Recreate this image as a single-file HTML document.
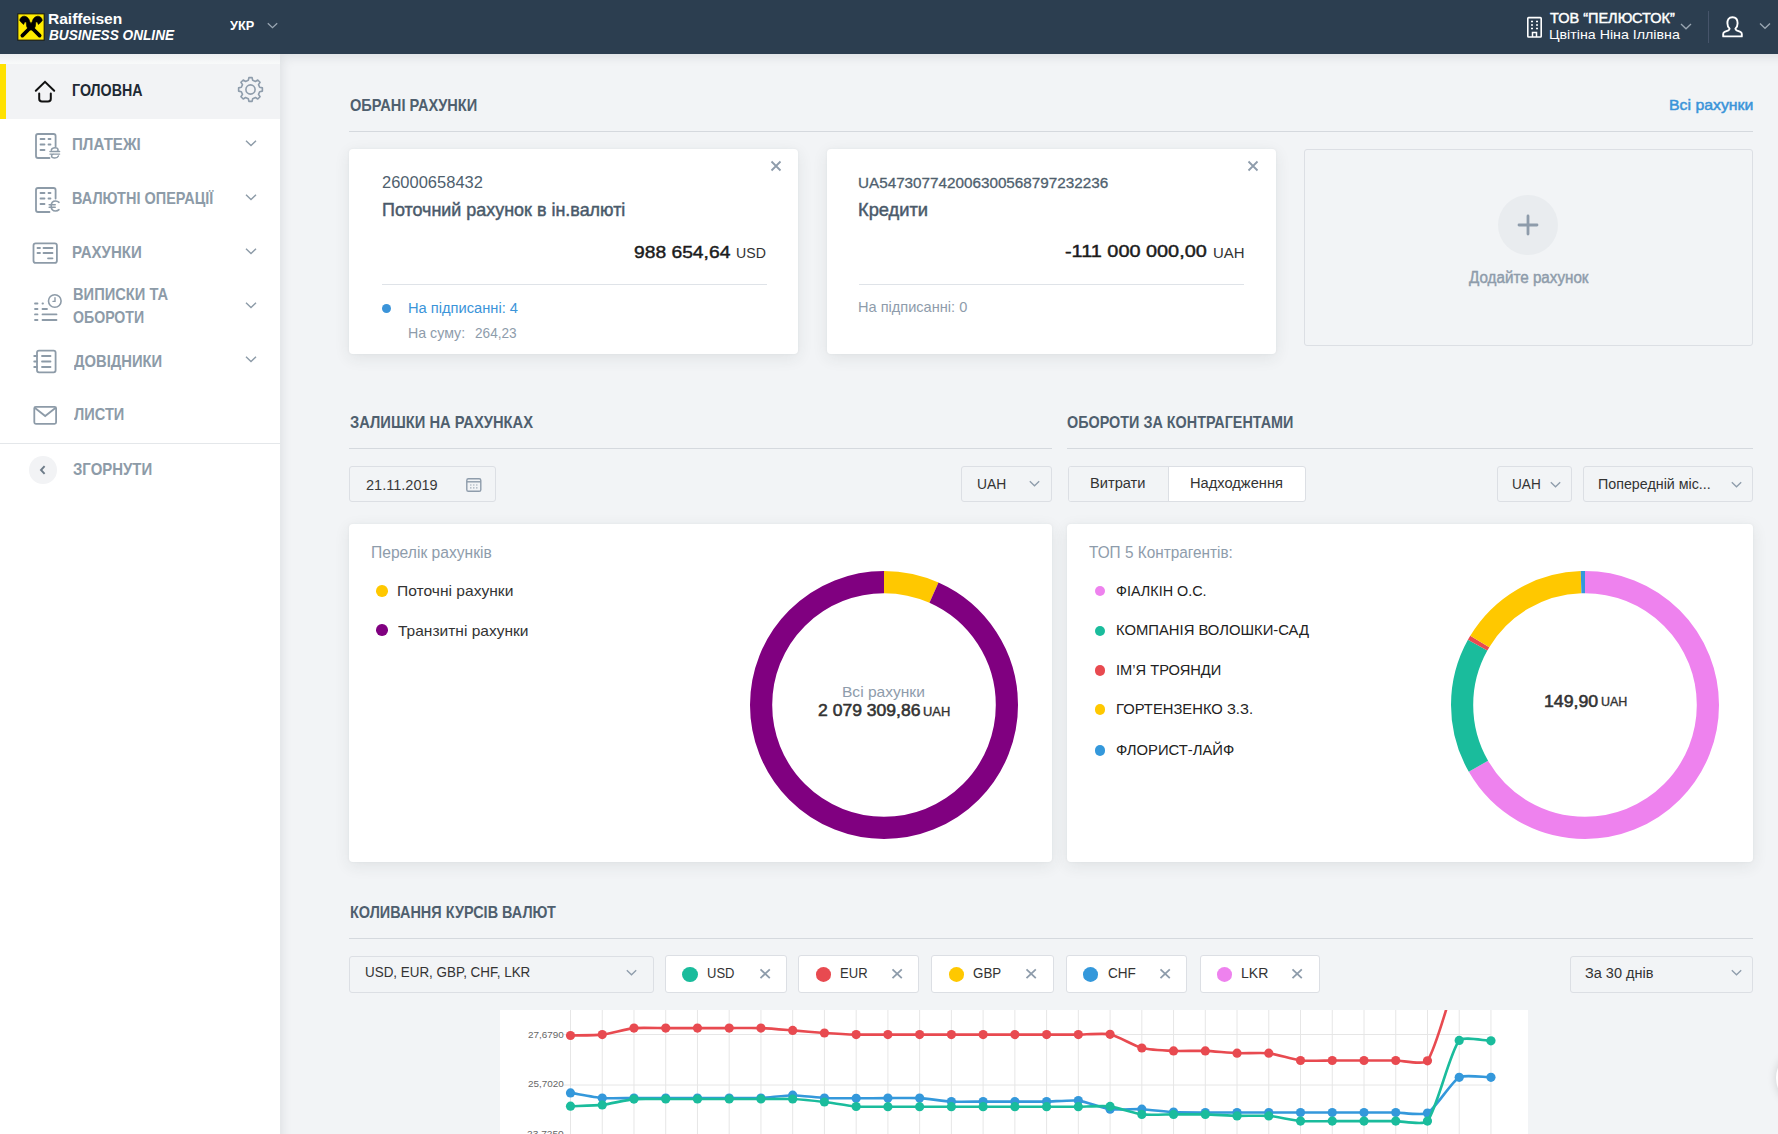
<!DOCTYPE html>
<html><head><meta charset="utf-8">
<style>
*{box-sizing:border-box;margin:0;padding:0}
html,body{width:1778px;height:1134px;overflow:hidden}
body{font-family:"Liberation Sans",sans-serif;background:#f2f4f6;position:relative}
.a{position:absolute}
.t{position:absolute;white-space:nowrap;line-height:1;z-index:10}
.box{position:absolute;border:1px solid #dcdfe4;border-radius:3px}
.card{position:absolute;background:#fff;border-radius:4px;box-shadow:0 4px 16px rgba(40,50,60,.09),0 0 3px rgba(40,50,60,.05)}
.hl{position:absolute;height:1px;background:#d5d9de}
</style></head>
<body>
<div class="a" style="left:0;top:0;width:1778px;height:54px;background:#2c3e50"></div>
<svg class="a" style="left:17px;top:13px" width="28" height="28" viewBox="-0.35 -0.35 28 28">
<rect x="0.5" y="0.5" width="26.3" height="26.3" fill="#ffec00" stroke="#111" stroke-width="1"/>
<g fill="#000" stroke="#000" stroke-linejoin="round">
<path d="M5 22.3 L13.65 13.6 L22.3 22.3" fill="none" stroke-width="3.7" stroke-linecap="round"/>
<path d="M2.3 6.9 Q3.4 2.7 7.0 2.8 Q10.1 2.9 11.7 6.2 L12.5 8.4 L13.65 10.1 L14.8 8.4 L15.6 6.2 Q17.2 2.9 20.3 2.8 Q23.9 2.7 25.0 6.9 Q23.8 9.2 21 11.2 L20.0 8.6 L18.5 8.6 L18.0 13.2 L16.6 15.6 L13.65 16.8 L10.7 15.6 L9.3 13.2 L8.8 8.6 L7.3 8.6 L6.3 11.2 Q3.5 9.2 2.3 6.9 Z" stroke-width="0.6"/>
</g>
</svg>
<svg class="a" style="left:266px;top:21px" width="13" height="9" viewBox="0 0 13 9"><path d="M1.8 2.2 L6.5 6.7 L11.2 2.2" stroke="#9aa6b2" stroke-width="1.3" fill="none"/></svg>
<svg class="a" style="left:1525px;top:15px" width="19" height="24" viewBox="0 0 19 24" fill="none" stroke="#fff" stroke-width="1.6">
<rect x="2.8" y="2.6" width="13.4" height="19.4" rx="0.8"/>
<path d="M6 6.5 H8 M11 6.5 H13 M6 10 H8 M11 10 H13 M6 13.5 H8 M11 13.5 H13" stroke-width="1.5"/>
<path d="M7.5 22 V17.5 H11.5 V22" stroke-width="1.5"/>
</svg>
<svg class="a" style="left:1679px;top:22px" width="14" height="9" viewBox="0 0 14 9"><path d="M2 2 L7 6.8 L12 2" stroke="#9aa6b2" stroke-width="1.3" fill="none"/></svg>
<div class="a" style="left:1708px;top:11px;width:1px;height:32px;background:#46546a"></div>
<svg class="a" style="left:1721px;top:15px" width="23" height="24" viewBox="0 0 23 24" fill="none" stroke="#fff" stroke-width="1.9" stroke-linejoin="round">
<path d="M11.5 2.2 C7.6 2.2 6.4 5.2 6.4 8.2 C6.4 10.8 7.5 12.6 8.6 13.6 C8.6 14.4 8.3 14.9 7.4 15.3 L3.6 16.8 C2.6 17.2 2.2 17.9 2.2 18.9 V21.4 H20.8 V18.9 C20.8 17.9 20.4 17.2 19.4 16.8 L15.6 15.3 C14.7 14.9 14.4 14.4 14.4 13.6 C15.5 12.6 16.6 10.8 16.6 8.2 C16.6 5.2 15.4 2.2 11.5 2.2 Z"/>
</svg>
<svg class="a" style="left:1758px;top:21px" width="14" height="10" viewBox="0 0 14 10"><path d="M2 2.5 L7 7.3 L12 2.5" stroke="#9aa6b2" stroke-width="1.3" fill="none"/></svg>
<div class="a" style="left:0;top:54px;width:280px;height:1080px;background:#fff"></div>
<div class="a" style="left:0;top:54px;width:280px;height:10px;background:linear-gradient(#eceef1,#f9fafa)"></div>
<div class="a" style="left:0;top:64px;width:280px;height:55px;background:#f2f3f5"></div>
<div class="a" style="left:0;top:64px;width:6px;height:55px;background:#ffe100"></div>
<svg class="a" style="left:33px;top:79px" width="24" height="26" viewBox="0 0 24 26">
<path d="M2.8 11.8 L12 2.8 L21.2 11.8" stroke="#111" stroke-width="2" fill="none" stroke-linecap="round"/>
<path d="M6.2 14.5 V19.8 Q6.2 22.6 9 22.6 H15 Q17.8 22.6 17.8 19.8 V14.5" stroke="#111" stroke-width="2" fill="none" stroke-linecap="round"/>
</svg>
<svg class="a" style="left:236px;top:75px" width="29" height="29" viewBox="0 0 29 29">
<path d="M12.31 5.36 L12.90 2.61 L16.10 2.61 L16.69 5.36 L19.41 6.49 L21.78 4.96 L24.04 7.22 L22.51 9.59 L23.64 12.31 L26.39 12.90 L26.39 16.10 L23.64 16.69 L22.51 19.41 L24.04 21.78 L21.78 24.04 L19.41 22.51 L16.69 23.64 L16.10 26.39 L12.90 26.39 L12.31 23.64 L9.59 22.51 L7.22 24.04 L4.96 21.78 L6.49 19.41 L5.36 16.69 L2.61 16.10 L2.61 12.90 L5.36 12.31 L6.49 9.59 L4.96 7.22 L7.22 4.96 L9.59 6.49 Z" stroke="#8e9cab" stroke-width="1.6" fill="none" stroke-linejoin="round"/>
<circle cx="14.5" cy="14.5" r="4.6" stroke="#8e9cab" stroke-width="1.6" fill="none"/>
</svg>
<svg class="a" style="left:244px;top:138.5px" width="14" height="9" viewBox="0 0 14 9"><path d="M2 1.8 L7 6.5 L12 1.8" stroke="#8d9ba8" stroke-width="1.4" fill="none"/></svg>
<svg class="a" style="left:244px;top:192.5px" width="14" height="9" viewBox="0 0 14 9"><path d="M2 1.8 L7 6.5 L12 1.8" stroke="#8d9ba8" stroke-width="1.4" fill="none"/></svg>
<svg class="a" style="left:244px;top:247.0px" width="14" height="9" viewBox="0 0 14 9"><path d="M2 1.8 L7 6.5 L12 1.8" stroke="#8d9ba8" stroke-width="1.4" fill="none"/></svg>
<svg class="a" style="left:244px;top:301.0px" width="14" height="9" viewBox="0 0 14 9"><path d="M2 1.8 L7 6.5 L12 1.8" stroke="#8d9ba8" stroke-width="1.4" fill="none"/></svg>
<svg class="a" style="left:244px;top:354.5px" width="14" height="9" viewBox="0 0 14 9"><path d="M2 1.8 L7 6.5 L12 1.8" stroke="#8d9ba8" stroke-width="1.4" fill="none"/></svg>
<div class="a" style="left:0;top:443px;width:280px;height:1px;background:#e4e7ea"></div>
<div class="a" style="left:29px;top:456px;width:27.5px;height:27.5px;border-radius:50%;background:#f2f3f5"></div>
<svg class="a" style="left:36px;top:463px" width="14" height="14" viewBox="0 0 14 14"><path d="M8.6 3.2 L5 7 L8.6 10.8" stroke="#6e7c89" stroke-width="1.9" fill="none"/></svg>
<svg class="a" style="left:30px;top:125px" width="34" height="305" viewBox="30 125 34 305" fill="none" stroke="#8d9ba8" stroke-width="1.8" stroke-linecap="round">
<path d="M49.5 158 H38 Q36 158 36 156 V136 Q36 134 38 134 H53.5 Q55.6 134 55.6 136 V146.5"/>
<path d="M40.5 139 H44.5 M48.5 139 H50.5 M40.5 144.5 H44.5 M48.5 144.5 H50.5 M40.5 150 H44.5"/>
<path d="M51.3 150 Q51.9 147.7 54.9 147.7 Q58.1 147.7 58.1 149.9 Q58.1 151 56.3 151.4 M50 151.4 H59.6 M50 154.1 H59.6 M53.4 154.1 Q51.5 154.8 51.5 156 Q51.6 158 54.8 158 Q57.6 158 58.4 156" stroke-width="1.45"/>
<path d="M49.5 212 H38 Q36 212 36 210 V190 Q36 188 38 188 H53.5 Q55.6 188 55.6 190 V198.5"/>
<path d="M40.5 193 H44.5 M48.5 193 H50.5 M40.5 198.5 H44.5 M48.5 198.5 H50.5 M40.5 204 H44.5"/>
<path d="M59 202.3 Q57.6 201 55.6 201 Q51.2 201 51.2 206 Q51.2 211 55.6 211 Q57.6 211 59 209.7 M49.2 204.8 H55.2 M49.2 207.2 H55.2" stroke-width="1.6"/>
<rect x="33.5" y="243.3" width="23.4" height="19.6" rx="2.2"/>
<path d="M37.5 248 H40 M43.5 248 H52.5 M37.5 253 H40 M43.5 253 H52.5 M48 258.3 H52.5"/>
<path d="M35 303.5 H37.5 M35 309 H37.5 M35 314.4 H37.5 M35 320 H37.5 M42.5 303.5 H43 M42.5 309 H47 M42.5 314.4 H56.5 M42.5 320 H56.5"/>
<circle cx="54.8" cy="301" r="6.3" stroke-width="1.6"/>
<path d="M55 297.8 V301.4 H53" stroke-width="1.4"/>
<rect x="37" y="350.6" width="18.6" height="21.7" rx="2"/>
<path d="M34.2 356 H37 M34.2 361.5 H37 M34.2 367 H37 M42 356 H50.5 M42 361.5 H50.5 M42 367 H50.5"/>
<rect x="34.3" y="406.8" width="21.8" height="17" rx="1.5"/>
<path d="M35 408 L45.2 416 L55.4 408"/>
</svg>
<div class="a" style="left:280px;top:54px;width:1498px;height:1080px;box-shadow:inset 8px 9px 12px -7px rgba(30,40,50,.11)"></div>
<div class="hl" style="left:349px;top:130.5px;width:1404px"></div>
<div class="card" style="left:349px;top:149px;width:449px;height:205px"></div>
<div class="card" style="left:827px;top:149px;width:449px;height:205px"></div>
<div class="box" style="left:1304px;top:149px;width:449px;height:197px;border-color:#dcdfe4"></div>
<svg class="a" style="left:770px;top:160px" width="12" height="12" viewBox="0 0 12 12"><path d="M1.5 1.5 L10.5 10.5 M10.5 1.5 L1.5 10.5" stroke="#8e9cab" stroke-width="1.8"/></svg>
<svg class="a" style="left:1247px;top:160px" width="12" height="12" viewBox="0 0 12 12"><path d="M1.5 1.5 L10.5 10.5 M10.5 1.5 L1.5 10.5" stroke="#8e9cab" stroke-width="1.8"/></svg>
<div class="hl" style="left:382px;top:284px;width:385px;background:#dfe3e8"></div>
<div class="a" style="left:382px;top:303.5px;width:9px;height:9px;border-radius:50%;background:#3b94d9"></div>
<div class="hl" style="left:859px;top:284px;width:385px;background:#dfe3e8"></div>
<div class="a" style="left:1498px;top:195.3px;width:60px;height:60px;border-radius:50%;background:#e9ecef"></div>
<svg class="a" style="left:1516px;top:213px" width="24" height="24" viewBox="0 0 24 24"><path d="M12 3 V21 M3 12 H21" stroke="#8e9cab" stroke-width="2.8" stroke-linecap="round"/></svg>
<div class="hl" style="left:349px;top:448px;width:702.5px"></div>
<div class="hl" style="left:1067px;top:448px;width:686px"></div>
<div class="box" style="left:349px;top:466px;width:146.5px;height:36px"></div>
<svg class="a" style="left:465px;top:477px" width="18" height="16" viewBox="0 0 18 16" fill="none" stroke="#8e9cab">
<rect x="1.8" y="1.8" width="14" height="12.5" rx="1.6" stroke-width="1.4"/>
<path d="M1.8 4.8 H15.8" stroke-width="1.4"/>
<path d="M5.2 8 H6.4 M8.2 8 H9.4 M11.2 8 H12.4 M5.2 10.8 H6.4 M8.2 10.8 H9.4 M11.2 10.8 H12.4" stroke-width="1.2"/>
</svg>
<div class="box" style="left:961.4px;top:466px;width:90.2px;height:36px"></div>
<svg class="a" style="left:1028.2px;top:479.4px" width="13" height="9" viewBox="0 0 13 9"><path d="M1.8 2.2 L6.5 6.8 L11.2 2.2" stroke="#8e9cab" stroke-width="1.3" fill="none"/></svg>
<div class="box" style="left:1067.6px;top:466px;width:238px;height:36px;background:#fff;overflow:hidden"><div class="a" style="left:0;top:0;width:100.5px;height:34px;background:#f2f4f6;border-right:1px solid #dcdfe4"></div></div>
<div class="box" style="left:1497.3px;top:466px;width:75.2px;height:36px"></div>
<svg class="a" style="left:1549.2px;top:479.8px" width="13" height="9" viewBox="0 0 13 9"><path d="M1.8 2.2 L6.5 6.8 L11.2 2.2" stroke="#8e9cab" stroke-width="1.3" fill="none"/></svg>
<div class="box" style="left:1583.4px;top:466px;width:169.6px;height:36px"></div>
<svg class="a" style="left:1729.5px;top:479.8px" width="13" height="9" viewBox="0 0 13 9"><path d="M1.8 2.2 L6.5 6.8 L11.2 2.2" stroke="#8e9cab" stroke-width="1.3" fill="none"/></svg>
<div class="card" style="left:349px;top:524px;width:702.5px;height:337.6px"></div>
<div class="card" style="left:1067px;top:524px;width:686px;height:337.8px"></div>
<div class="a" style="left:376.2px;top:585px;width:11.6px;height:11.6px;border-radius:50%;background:#ffc800"></div>
<div class="a" style="left:376.2px;top:624.4px;width:11.6px;height:11.6px;border-radius:50%;background:#800080"></div>
<svg class="a" style="left:743.9px;top:565.2px" width="280" height="280" viewBox="0 0 280 280"><g transform="rotate(-90 140 140)"><circle cx="140" cy="140" r="122.9" fill="none" stroke="#ffc800" stroke-width="22.2" stroke-dasharray="51.480 772.203" stroke-dashoffset="0.000"/><circle cx="140" cy="140" r="122.9" fill="none" stroke="#800080" stroke-width="22.2" stroke-dasharray="720.723 772.203" stroke-dashoffset="-51.480"/></g></svg>
<div class="a" style="left:1094.6000000000001px;top:585.7px;width:10.6px;height:10.6px;border-radius:50%;background:#ee82ee"></div>
<div class="a" style="left:1094.6000000000001px;top:625.5px;width:10.6px;height:10.6px;border-radius:50%;background:#1abc9c"></div>
<div class="a" style="left:1094.6000000000001px;top:665.3000000000001px;width:10.6px;height:10.6px;border-radius:50%;background:#e84a50"></div>
<div class="a" style="left:1094.6000000000001px;top:704.0px;width:10.6px;height:10.6px;border-radius:50%;background:#ffc800"></div>
<div class="a" style="left:1094.6000000000001px;top:745.0px;width:10.6px;height:10.6px;border-radius:50%;background:#3498db"></div>
<svg class="a" style="left:1445.3px;top:565.3px" width="280" height="280" viewBox="0 0 280 280"><g transform="rotate(-90 140 140)"><circle cx="140" cy="140" r="122.9" fill="none" stroke="#ee82ee" stroke-width="22.2" stroke-dasharray="514.802 772.203" stroke-dashoffset="0.000"/><circle cx="140" cy="140" r="122.9" fill="none" stroke="#1abc9c" stroke-width="22.2" stroke-dasharray="126.556 772.203" stroke-dashoffset="-514.802"/><circle cx="140" cy="140" r="122.9" fill="none" stroke="#e84a50" stroke-width="22.2" stroke-dasharray="4.290 772.203" stroke-dashoffset="-641.358"/><circle cx="140" cy="140" r="122.9" fill="none" stroke="#ffc800" stroke-width="22.2" stroke-dasharray="122.266 772.203" stroke-dashoffset="-645.648"/><circle cx="140" cy="140" r="122.9" fill="none" stroke="#3498db" stroke-width="22.2" stroke-dasharray="4.290 772.203" stroke-dashoffset="-767.913"/></g></svg>
<div class="hl" style="left:349px;top:938px;width:1404px"></div>
<div class="box" style="left:349px;top:955.5px;width:305px;height:37px"></div>
<svg class="a" style="left:625.0px;top:967.7px" width="13" height="9" viewBox="0 0 13 9"><path d="M1.8 2.2 L6.5 6.8 L11.2 2.2" stroke="#8e9cab" stroke-width="1.3" fill="none"/></svg>
<div class="box" style="left:665.3px;top:955px;width:122px;height:37.5px;background:#fff"></div>
<div class="a" style="left:682.3px;top:966.5px;width:15.5px;height:15px;border-radius:50%;background:#1abc9c"></div>
<svg class="a" style="left:758.8px;top:968px" width="12.5" height="11.5" viewBox="0 0 12.5 11.5"><path d="M1.5 1.3 L10.8 10.2 M10.8 1.3 L1.5 10.2" stroke="#8e9cab" stroke-width="1.8"/></svg>
<div class="box" style="left:798.2px;top:955px;width:121.2px;height:37.5px;background:#fff"></div>
<div class="a" style="left:815.8px;top:966.5px;width:15.5px;height:15px;border-radius:50%;background:#e84a50"></div>
<svg class="a" style="left:890.9px;top:968px" width="12.5" height="11.5" viewBox="0 0 12.5 11.5"><path d="M1.5 1.3 L10.8 10.2 M10.8 1.3 L1.5 10.2" stroke="#8e9cab" stroke-width="1.8"/></svg>
<div class="box" style="left:931px;top:955px;width:123px;height:37.5px;background:#fff"></div>
<div class="a" style="left:948.5px;top:966.5px;width:15.5px;height:15px;border-radius:50%;background:#ffc800"></div>
<svg class="a" style="left:1024.8px;top:968px" width="12.5" height="11.5" viewBox="0 0 12.5 11.5"><path d="M1.5 1.3 L10.8 10.2 M10.8 1.3 L1.5 10.2" stroke="#8e9cab" stroke-width="1.8"/></svg>
<div class="box" style="left:1065.6px;top:955px;width:121.6px;height:37.5px;background:#fff"></div>
<div class="a" style="left:1082.6px;top:966.5px;width:15.5px;height:15px;border-radius:50%;background:#3498db"></div>
<svg class="a" style="left:1158.7px;top:968px" width="12.5" height="11.5" viewBox="0 0 12.5 11.5"><path d="M1.5 1.3 L10.8 10.2 M10.8 1.3 L1.5 10.2" stroke="#8e9cab" stroke-width="1.8"/></svg>
<div class="box" style="left:1199.5px;top:955px;width:120px;height:37.5px;background:#fff"></div>
<div class="a" style="left:1216.5px;top:966.5px;width:15.5px;height:15px;border-radius:50%;background:#ee82ee"></div>
<svg class="a" style="left:1290.6px;top:968px" width="12.5" height="11.5" viewBox="0 0 12.5 11.5"><path d="M1.5 1.3 L10.8 10.2 M10.8 1.3 L1.5 10.2" stroke="#8e9cab" stroke-width="1.8"/></svg>
<div class="box" style="left:1570px;top:955.5px;width:183px;height:37px"></div>
<svg class="a" style="left:1729.5px;top:968px" width="13" height="9" viewBox="0 0 13 9"><path d="M1.8 2.2 L6.5 6.8 L11.2 2.2" stroke="#8e9cab" stroke-width="1.3" fill="none"/></svg>
<svg class="a" style="left:500px;top:1010px" width="1028" height="124" viewBox="500 1010 1028 124"><rect x="500" y="1010" width="1028" height="124" fill="#fff"/><line x1="570.50" y1="1010" x2="570.50" y2="1134" stroke="#e6e6e6" stroke-width="1"/><line x1="602.24" y1="1010" x2="602.24" y2="1134" stroke="#e6e6e6" stroke-width="1"/><line x1="633.98" y1="1010" x2="633.98" y2="1134" stroke="#e6e6e6" stroke-width="1"/><line x1="665.72" y1="1010" x2="665.72" y2="1134" stroke="#e6e6e6" stroke-width="1"/><line x1="697.46" y1="1010" x2="697.46" y2="1134" stroke="#e6e6e6" stroke-width="1"/><line x1="729.20" y1="1010" x2="729.20" y2="1134" stroke="#e6e6e6" stroke-width="1"/><line x1="760.94" y1="1010" x2="760.94" y2="1134" stroke="#e6e6e6" stroke-width="1"/><line x1="792.68" y1="1010" x2="792.68" y2="1134" stroke="#e6e6e6" stroke-width="1"/><line x1="824.42" y1="1010" x2="824.42" y2="1134" stroke="#e6e6e6" stroke-width="1"/><line x1="856.16" y1="1010" x2="856.16" y2="1134" stroke="#e6e6e6" stroke-width="1"/><line x1="887.90" y1="1010" x2="887.90" y2="1134" stroke="#e6e6e6" stroke-width="1"/><line x1="919.64" y1="1010" x2="919.64" y2="1134" stroke="#e6e6e6" stroke-width="1"/><line x1="951.38" y1="1010" x2="951.38" y2="1134" stroke="#e6e6e6" stroke-width="1"/><line x1="983.12" y1="1010" x2="983.12" y2="1134" stroke="#e6e6e6" stroke-width="1"/><line x1="1014.86" y1="1010" x2="1014.86" y2="1134" stroke="#e6e6e6" stroke-width="1"/><line x1="1046.60" y1="1010" x2="1046.60" y2="1134" stroke="#e6e6e6" stroke-width="1"/><line x1="1078.34" y1="1010" x2="1078.34" y2="1134" stroke="#e6e6e6" stroke-width="1"/><line x1="1110.08" y1="1010" x2="1110.08" y2="1134" stroke="#e6e6e6" stroke-width="1"/><line x1="1141.82" y1="1010" x2="1141.82" y2="1134" stroke="#e6e6e6" stroke-width="1"/><line x1="1173.56" y1="1010" x2="1173.56" y2="1134" stroke="#e6e6e6" stroke-width="1"/><line x1="1205.30" y1="1010" x2="1205.30" y2="1134" stroke="#e6e6e6" stroke-width="1"/><line x1="1237.04" y1="1010" x2="1237.04" y2="1134" stroke="#e6e6e6" stroke-width="1"/><line x1="1268.78" y1="1010" x2="1268.78" y2="1134" stroke="#e6e6e6" stroke-width="1"/><line x1="1300.52" y1="1010" x2="1300.52" y2="1134" stroke="#e6e6e6" stroke-width="1"/><line x1="1332.26" y1="1010" x2="1332.26" y2="1134" stroke="#e6e6e6" stroke-width="1"/><line x1="1364.00" y1="1010" x2="1364.00" y2="1134" stroke="#e6e6e6" stroke-width="1"/><line x1="1395.74" y1="1010" x2="1395.74" y2="1134" stroke="#e6e6e6" stroke-width="1"/><line x1="1427.48" y1="1010" x2="1427.48" y2="1134" stroke="#e6e6e6" stroke-width="1"/><line x1="1459.22" y1="1010" x2="1459.22" y2="1134" stroke="#e6e6e6" stroke-width="1"/><line x1="1490.96" y1="1010" x2="1490.96" y2="1134" stroke="#e6e6e6" stroke-width="1"/><line x1="563" y1="1034.5" x2="1490.96" y2="1034.5" stroke="#e6e6e6" stroke-width="1"/><line x1="563" y1="1085" x2="1490.96" y2="1085" stroke="#e6e6e6" stroke-width="1"/><line x1="563" y1="1135.5" x2="1490.96" y2="1135.5" stroke="#e6e6e6" stroke-width="1"/><defs><clipPath id="cc"><rect x="500" y="1010" width="1028" height="124"/></clipPath></defs><g clip-path="url(#cc)"><path d="M570.50 1035.50 C576.85 1035.32 595.96 1035.33 602.24 1034.60 C608.65 1033.85 627.57 1028.76 633.98 1028.10 C640.26 1027.46 659.37 1028.10 665.72 1028.10 C672.07 1028.10 691.11 1028.10 697.46 1028.10 C703.81 1028.10 722.85 1028.10 729.20 1028.10 C735.55 1028.10 754.60 1027.87 760.94 1028.10 C767.30 1028.33 786.33 1029.91 792.68 1030.40 C799.03 1030.89 818.07 1032.58 824.42 1033.00 C830.76 1033.42 849.81 1034.44 856.16 1034.60 C862.50 1034.76 881.55 1034.60 887.90 1034.60 C894.25 1034.60 913.29 1034.60 919.64 1034.60 C925.99 1034.60 945.03 1034.60 951.38 1034.60 C957.73 1034.60 976.77 1034.60 983.12 1034.60 C989.47 1034.60 1008.51 1034.60 1014.86 1034.60 C1021.21 1034.60 1040.25 1034.60 1046.60 1034.60 C1052.95 1034.60 1071.99 1034.63 1078.34 1034.60 C1084.69 1034.57 1104.00 1033.02 1110.08 1034.30 C1116.70 1035.70 1135.21 1046.27 1141.82 1048.00 C1147.91 1049.59 1167.20 1050.61 1173.56 1050.90 C1179.89 1051.19 1198.96 1050.67 1205.30 1050.90 C1211.66 1051.13 1230.68 1052.97 1237.04 1053.20 C1243.38 1053.43 1262.51 1052.48 1268.78 1053.20 C1275.21 1053.94 1294.09 1059.76 1300.52 1060.50 C1306.79 1061.22 1325.91 1060.50 1332.26 1060.50 C1338.61 1060.50 1357.65 1060.50 1364.00 1060.50 C1370.35 1060.50 1389.39 1060.47 1395.74 1060.50 C1402.09 1060.53 1424.42 1065.35 1427.48 1060.80 C1437.12 1046.45 1452.87 984.96 1459.22 966.00" fill="none" stroke="#e84a50" stroke-width="2.6" stroke-linejoin="round"/><circle cx="570.50" cy="1035.50" r="4.6" fill="#e84a50"/><circle cx="602.24" cy="1034.60" r="4.6" fill="#e84a50"/><circle cx="633.98" cy="1028.10" r="4.6" fill="#e84a50"/><circle cx="665.72" cy="1028.10" r="4.6" fill="#e84a50"/><circle cx="697.46" cy="1028.10" r="4.6" fill="#e84a50"/><circle cx="729.20" cy="1028.10" r="4.6" fill="#e84a50"/><circle cx="760.94" cy="1028.10" r="4.6" fill="#e84a50"/><circle cx="792.68" cy="1030.40" r="4.6" fill="#e84a50"/><circle cx="824.42" cy="1033.00" r="4.6" fill="#e84a50"/><circle cx="856.16" cy="1034.60" r="4.6" fill="#e84a50"/><circle cx="887.90" cy="1034.60" r="4.6" fill="#e84a50"/><circle cx="919.64" cy="1034.60" r="4.6" fill="#e84a50"/><circle cx="951.38" cy="1034.60" r="4.6" fill="#e84a50"/><circle cx="983.12" cy="1034.60" r="4.6" fill="#e84a50"/><circle cx="1014.86" cy="1034.60" r="4.6" fill="#e84a50"/><circle cx="1046.60" cy="1034.60" r="4.6" fill="#e84a50"/><circle cx="1078.34" cy="1034.60" r="4.6" fill="#e84a50"/><circle cx="1110.08" cy="1034.30" r="4.6" fill="#e84a50"/><circle cx="1141.82" cy="1048.00" r="4.6" fill="#e84a50"/><circle cx="1173.56" cy="1050.90" r="4.6" fill="#e84a50"/><circle cx="1205.30" cy="1050.90" r="4.6" fill="#e84a50"/><circle cx="1237.04" cy="1053.20" r="4.6" fill="#e84a50"/><circle cx="1268.78" cy="1053.20" r="4.6" fill="#e84a50"/><circle cx="1300.52" cy="1060.50" r="4.6" fill="#e84a50"/><circle cx="1332.26" cy="1060.50" r="4.6" fill="#e84a50"/><circle cx="1364.00" cy="1060.50" r="4.6" fill="#e84a50"/><circle cx="1395.74" cy="1060.50" r="4.6" fill="#e84a50"/><circle cx="1427.48" cy="1060.80" r="4.6" fill="#e84a50"/><circle cx="1459.22" cy="966.00" r="4.6" fill="#e84a50"/><path d="M570.50 1092.90 C576.85 1093.92 595.85 1097.49 602.24 1098.00 C608.55 1098.51 627.63 1098.00 633.98 1098.00 C640.33 1098.00 659.37 1098.00 665.72 1098.00 C672.07 1098.00 691.11 1098.00 697.46 1098.00 C703.81 1098.00 722.85 1098.00 729.20 1098.00 C735.55 1098.00 754.60 1098.28 760.94 1098.00 C767.30 1097.72 786.33 1095.20 792.68 1095.20 C799.03 1095.20 818.06 1097.69 824.42 1098.00 C830.76 1098.31 849.81 1098.29 856.16 1098.30 C862.51 1098.31 881.55 1098.12 887.90 1098.10 C894.25 1098.08 913.31 1097.75 919.64 1098.10 C926.01 1098.45 945.01 1101.25 951.38 1101.60 C957.71 1101.95 976.77 1101.60 983.12 1101.60 C989.47 1101.60 1008.51 1101.60 1014.86 1101.60 C1021.21 1101.60 1040.25 1101.70 1046.60 1101.60 C1052.95 1101.50 1072.10 1099.85 1078.34 1100.60 C1084.80 1101.37 1103.62 1108.32 1110.08 1109.20 C1116.32 1110.04 1135.49 1108.91 1141.82 1109.20 C1148.18 1109.49 1167.20 1111.77 1173.56 1112.10 C1179.90 1112.43 1198.95 1112.46 1205.30 1112.50 C1211.65 1112.54 1230.69 1112.50 1237.04 1112.50 C1243.39 1112.50 1262.43 1112.50 1268.78 1112.50 C1275.13 1112.50 1294.17 1112.50 1300.52 1112.50 C1306.87 1112.50 1325.91 1112.50 1332.26 1112.50 C1338.61 1112.50 1357.65 1112.50 1364.00 1112.50 C1370.35 1112.50 1389.39 1112.45 1395.74 1112.50 C1402.09 1112.55 1422.41 1115.81 1427.48 1113.00 C1435.11 1108.77 1451.59 1081.59 1459.22 1077.30 C1464.29 1074.45 1484.61 1077.30 1490.96 1077.30" fill="none" stroke="#3498db" stroke-width="2.6" stroke-linejoin="round"/><circle cx="570.50" cy="1092.90" r="4.6" fill="#3498db"/><circle cx="602.24" cy="1098.00" r="4.6" fill="#3498db"/><circle cx="633.98" cy="1098.00" r="4.6" fill="#3498db"/><circle cx="665.72" cy="1098.00" r="4.6" fill="#3498db"/><circle cx="697.46" cy="1098.00" r="4.6" fill="#3498db"/><circle cx="729.20" cy="1098.00" r="4.6" fill="#3498db"/><circle cx="760.94" cy="1098.00" r="4.6" fill="#3498db"/><circle cx="792.68" cy="1095.20" r="4.6" fill="#3498db"/><circle cx="824.42" cy="1098.00" r="4.6" fill="#3498db"/><circle cx="856.16" cy="1098.30" r="4.6" fill="#3498db"/><circle cx="887.90" cy="1098.10" r="4.6" fill="#3498db"/><circle cx="919.64" cy="1098.10" r="4.6" fill="#3498db"/><circle cx="951.38" cy="1101.60" r="4.6" fill="#3498db"/><circle cx="983.12" cy="1101.60" r="4.6" fill="#3498db"/><circle cx="1014.86" cy="1101.60" r="4.6" fill="#3498db"/><circle cx="1046.60" cy="1101.60" r="4.6" fill="#3498db"/><circle cx="1078.34" cy="1100.60" r="4.6" fill="#3498db"/><circle cx="1110.08" cy="1109.20" r="4.6" fill="#3498db"/><circle cx="1141.82" cy="1109.20" r="4.6" fill="#3498db"/><circle cx="1173.56" cy="1112.10" r="4.6" fill="#3498db"/><circle cx="1205.30" cy="1112.50" r="4.6" fill="#3498db"/><circle cx="1237.04" cy="1112.50" r="4.6" fill="#3498db"/><circle cx="1268.78" cy="1112.50" r="4.6" fill="#3498db"/><circle cx="1300.52" cy="1112.50" r="4.6" fill="#3498db"/><circle cx="1332.26" cy="1112.50" r="4.6" fill="#3498db"/><circle cx="1364.00" cy="1112.50" r="4.6" fill="#3498db"/><circle cx="1395.74" cy="1112.50" r="4.6" fill="#3498db"/><circle cx="1427.48" cy="1113.00" r="4.6" fill="#3498db"/><circle cx="1459.22" cy="1077.30" r="4.6" fill="#3498db"/><circle cx="1490.96" cy="1077.30" r="4.6" fill="#3498db"/><path d="M570.50 1106.20 C576.85 1105.94 595.94 1105.60 602.24 1104.90 C608.64 1104.18 627.58 1099.69 633.98 1099.10 C640.28 1098.51 659.37 1099.01 665.72 1099.00 C672.07 1098.99 691.11 1099.00 697.46 1099.00 C703.81 1099.00 722.85 1099.00 729.20 1099.00 C735.55 1099.00 754.59 1099.00 760.94 1099.00 C767.29 1099.00 786.35 1098.70 792.68 1099.00 C799.04 1099.30 818.09 1101.25 824.42 1102.00 C830.79 1102.75 849.78 1106.03 856.16 1106.50 C862.48 1106.97 881.55 1106.68 887.90 1106.70 C894.25 1106.72 913.29 1106.70 919.64 1106.70 C925.99 1106.70 945.03 1106.70 951.38 1106.70 C957.73 1106.70 976.77 1106.70 983.12 1106.70 C989.47 1106.70 1008.51 1106.70 1014.86 1106.70 C1021.21 1106.70 1040.25 1106.70 1046.60 1106.70 C1052.95 1106.70 1071.99 1106.73 1078.34 1106.70 C1084.69 1106.67 1103.83 1105.64 1110.08 1106.40 C1116.53 1107.18 1135.37 1113.59 1141.82 1114.40 C1148.07 1115.19 1167.21 1114.40 1173.56 1114.40 C1179.91 1114.40 1198.96 1114.25 1205.30 1114.40 C1211.65 1114.55 1230.69 1115.75 1237.04 1115.90 C1243.38 1116.05 1262.47 1115.38 1268.78 1115.90 C1275.17 1116.42 1294.13 1120.58 1300.52 1121.10 C1306.83 1121.62 1325.91 1121.10 1332.26 1121.10 C1338.61 1121.10 1357.65 1121.10 1364.00 1121.10 C1370.35 1121.10 1389.39 1121.10 1395.74 1121.10 C1402.09 1121.10 1424.08 1125.42 1427.48 1121.10 C1436.77 1109.28 1449.93 1052.16 1459.22 1040.40 C1462.62 1036.10 1484.61 1040.72 1490.96 1040.80" fill="none" stroke="#1abc9c" stroke-width="2.6" stroke-linejoin="round"/><circle cx="570.50" cy="1106.20" r="4.6" fill="#1abc9c"/><circle cx="602.24" cy="1104.90" r="4.6" fill="#1abc9c"/><circle cx="633.98" cy="1099.10" r="4.6" fill="#1abc9c"/><circle cx="665.72" cy="1099.00" r="4.6" fill="#1abc9c"/><circle cx="697.46" cy="1099.00" r="4.6" fill="#1abc9c"/><circle cx="729.20" cy="1099.00" r="4.6" fill="#1abc9c"/><circle cx="760.94" cy="1099.00" r="4.6" fill="#1abc9c"/><circle cx="792.68" cy="1099.00" r="4.6" fill="#1abc9c"/><circle cx="824.42" cy="1102.00" r="4.6" fill="#1abc9c"/><circle cx="856.16" cy="1106.50" r="4.6" fill="#1abc9c"/><circle cx="887.90" cy="1106.70" r="4.6" fill="#1abc9c"/><circle cx="919.64" cy="1106.70" r="4.6" fill="#1abc9c"/><circle cx="951.38" cy="1106.70" r="4.6" fill="#1abc9c"/><circle cx="983.12" cy="1106.70" r="4.6" fill="#1abc9c"/><circle cx="1014.86" cy="1106.70" r="4.6" fill="#1abc9c"/><circle cx="1046.60" cy="1106.70" r="4.6" fill="#1abc9c"/><circle cx="1078.34" cy="1106.70" r="4.6" fill="#1abc9c"/><circle cx="1110.08" cy="1106.40" r="4.6" fill="#1abc9c"/><circle cx="1141.82" cy="1114.40" r="4.6" fill="#1abc9c"/><circle cx="1173.56" cy="1114.40" r="4.6" fill="#1abc9c"/><circle cx="1205.30" cy="1114.40" r="4.6" fill="#1abc9c"/><circle cx="1237.04" cy="1115.90" r="4.6" fill="#1abc9c"/><circle cx="1268.78" cy="1115.90" r="4.6" fill="#1abc9c"/><circle cx="1300.52" cy="1121.10" r="4.6" fill="#1abc9c"/><circle cx="1332.26" cy="1121.10" r="4.6" fill="#1abc9c"/><circle cx="1364.00" cy="1121.10" r="4.6" fill="#1abc9c"/><circle cx="1395.74" cy="1121.10" r="4.6" fill="#1abc9c"/><circle cx="1427.48" cy="1121.10" r="4.6" fill="#1abc9c"/><circle cx="1459.22" cy="1040.40" r="4.6" fill="#1abc9c"/><circle cx="1490.96" cy="1040.80" r="4.6" fill="#1abc9c"/></g></svg>
<div class="a" style="left:1776px;top:1050px;width:56px;height:56px;border-radius:50%;background:#fff;box-shadow:0 0 10px rgba(0,0,0,.15)"></div>
<div id="tx0" class="t" style="left:47.99px;top:12.35px;font-size:14px;font-weight:bold;font-style:normal;color:#fff;transform:scaleX(1.1096);transform-origin:0 0;">Raiffeisen</div>
<div id="tx1" class="t" style="left:49.00px;top:28.30px;font-size:14.3px;font-weight:bold;font-style:italic;color:#fff;transform:scaleX(0.9545);transform-origin:0 0;">BUSINESS ONLINE</div>
<div id="tx2" class="t" style="left:230.00px;top:20.49px;font-size:12.3px;font-weight:bold;font-style:normal;color:#fff;transform:scaleX(1.0329);transform-origin:0 0;">УКР</div>
<div id="tx3" class="t" style="left:1550.20px;top:11.48px;font-size:14.2px;font-weight:normal;font-style:normal;color:#fff;-webkit-text-stroke:0.45px #fff;transform:scaleX(1.0221);transform-origin:0 0;">ТОВ “ПЕЛЮСТОК”</div>
<div id="tx4" class="t" style="left:1549.20px;top:28.44px;font-size:13.3px;font-weight:normal;font-style:normal;color:#fff;transform:scaleX(1.0698);transform-origin:0 0;">Цвітіна Ніна Іллівна</div>
<div id="tx5" class="t" style="left:72.39px;top:81.81px;font-size:17px;font-weight:bold;font-style:normal;color:#1e2933;transform:scaleX(0.8378);transform-origin:0 0;">ГОЛОВНА</div>
<div id="tx6" class="t" style="left:72.39px;top:136.31px;font-size:17px;font-weight:bold;font-style:normal;color:#8d9ba8;transform:scaleX(0.8891);transform-origin:0 0;">ПЛАТЕЖІ</div>
<div id="tx7" class="t" style="left:72.41px;top:190.11px;font-size:17px;font-weight:bold;font-style:normal;color:#8d9ba8;transform:scaleX(0.8520);transform-origin:0 0;">ВАЛЮТНІ ОПЕРАЦІЇ</div>
<div id="tx8" class="t" style="left:72.39px;top:243.61px;font-size:17px;font-weight:bold;font-style:normal;color:#8d9ba8;transform:scaleX(0.8845);transform-origin:0 0;">РАХУНКИ</div>
<div id="tx9" class="t" style="left:72.99px;top:286.01px;font-size:17px;font-weight:bold;font-style:normal;color:#8d9ba8;transform:scaleX(0.8634);transform-origin:0 0;">ВИПИСКИ ТА</div>
<div id="tx10" class="t" style="left:72.99px;top:309.31px;font-size:17px;font-weight:bold;font-style:normal;color:#8d9ba8;transform:scaleX(0.8310);transform-origin:0 0;">ОБОРОТИ</div>
<div id="tx11" class="t" style="left:74.00px;top:353.01px;font-size:17px;font-weight:bold;font-style:normal;color:#8d9ba8;transform:scaleX(0.8684);transform-origin:0 0;">ДОВІДНИКИ</div>
<div id="tx12" class="t" style="left:74.00px;top:406.11px;font-size:17px;font-weight:bold;font-style:normal;color:#8d9ba8;transform:scaleX(0.8577);transform-origin:0 0;">ЛИСТИ</div>
<div id="tx13" class="t" style="left:72.99px;top:460.91px;font-size:17px;font-weight:bold;font-style:normal;color:#8d9ba8;transform:scaleX(0.8792);transform-origin:0 0;">ЗГОРНУТИ</div>
<div id="tx14" class="t" style="left:349.79px;top:96.63px;font-size:16.5px;font-weight:bold;font-style:normal;color:#4f5f6e;transform:scaleX(0.8848);transform-origin:0 0;">ОБРАНІ РАХУНКИ</div>
<div id="tx15" class="t" style="left:1669.00px;top:96.65px;font-size:15.3px;font-weight:normal;font-style:normal;color:#3b94d9;-webkit-text-stroke:0.5px #3b94d9;transform:scaleX(1.0352);transform-origin:0 0;">Всі рахунки</div>
<div id="tx16" class="t" style="left:382.00px;top:174.69px;font-size:15.6px;font-weight:normal;font-style:normal;color:#4f5f6e;transform:scaleX(1.0578);transform-origin:0 0;">26000658432</div>
<div id="tx17" class="t" style="left:382.00px;top:201.92px;font-size:17.7px;font-weight:normal;font-style:normal;color:#4a5a6a;-webkit-text-stroke:0.45px #4a5a6a;transform:scaleX(1.0140);transform-origin:0 0;">Поточний рахунок в ін.валюті</div>
<div id="tx18" class="t" style="left:634.41px;top:243.74px;font-size:17.2px;font-weight:normal;font-style:normal;color:#1c1c1c;-webkit-text-stroke:0.45px #1c1c1c;transform:scaleX(1.1199);transform-origin:0 0;">988 654,64</div>
<div id="tx19" class="t" style="left:736.37px;top:245.35px;font-size:15.3px;font-weight:normal;font-style:normal;color:#333;transform:scaleX(0.9245);transform-origin:0 0;">USD</div>
<div id="tx20" class="t" style="left:408.00px;top:300.59px;font-size:14.9px;font-weight:normal;font-style:normal;color:#3b94d9;transform:scaleX(0.9850);transform-origin:0 0;">На підписанні: 4</div>
<div id="tx21" class="t" style="left:407.98px;top:324.60px;font-size:15px;font-weight:normal;font-style:normal;color:#8e9cab;transform:scaleX(0.9474);transform-origin:0 0;">На суму:</div>
<div id="tx22" class="t" style="left:475.39px;top:324.60px;font-size:15px;font-weight:normal;font-style:normal;color:#8e9cab;transform:scaleX(0.9085);transform-origin:0 0;">264,23</div>
<div id="tx23" class="t" style="left:857.70px;top:175.43px;font-size:15.2px;font-weight:normal;font-style:normal;color:#4f5f6e;-webkit-text-stroke:0.3px #4f5f6e;transform:scaleX(1.0039);transform-origin:0 0;">UA547307742006300568797232236</div>
<div id="tx24" class="t" style="left:857.89px;top:202.32px;font-size:17.7px;font-weight:normal;font-style:normal;color:#4a5a6a;-webkit-text-stroke:0.45px #4a5a6a;transform:scaleX(1.0337);transform-origin:0 0;">Кредити</div>
<div id="tx25" class="t" style="left:1065.00px;top:243.44px;font-size:17.2px;font-weight:normal;font-style:normal;color:#1c1c1c;-webkit-text-stroke:0.45px #1c1c1c;transform:scaleX(1.1560);transform-origin:0 0;">-111 000 000,00</div>
<div id="tx26" class="t" style="left:1212.74px;top:245.05px;font-size:15.3px;font-weight:normal;font-style:normal;color:#333;transform:scaleX(0.9767);transform-origin:0 0;">UAH</div>
<div id="tx27" class="t" style="left:857.90px;top:298.50px;font-size:15px;font-weight:normal;font-style:normal;color:#8e9cab;transform:scaleX(0.9714);transform-origin:0 0;">На підписанні: 0</div>
<div id="tx28" class="t" style="left:1468.50px;top:269.99px;font-size:15.6px;font-weight:normal;font-style:normal;color:#8e9cab;-webkit-text-stroke:0.45px #8e9cab;transform:scaleX(0.9752);transform-origin:0 0;">Додайте рахунок</div>
<div id="tx29" class="t" style="left:349.50px;top:414.03px;font-size:16.5px;font-weight:bold;font-style:normal;color:#4f5f6e;transform:scaleX(0.8923);transform-origin:0 0;">ЗАЛИШКИ НА РАХУНКАХ</div>
<div id="tx30" class="t" style="left:1067.20px;top:414.33px;font-size:16.5px;font-weight:bold;font-style:normal;color:#4f5f6e;transform:scaleX(0.8715);transform-origin:0 0;">ОБОРОТИ ЗА КОНТРАГЕНТАМИ</div>
<div id="tx31" class="t" style="left:366.48px;top:476.65px;font-size:15.3px;font-weight:normal;font-style:normal;color:#3a3a3a;transform:scaleX(0.9501);transform-origin:0 0;">21.11.2019</div>
<div id="tx32" class="t" style="left:977.29px;top:475.75px;font-size:15.3px;font-weight:normal;font-style:normal;color:#333;transform:scaleX(0.9048);transform-origin:0 0;">UAH</div>
<div id="tx33" class="t" style="left:1090.47px;top:475.35px;font-size:15.3px;font-weight:normal;font-style:normal;color:#333;transform:scaleX(0.9571);transform-origin:0 0;">Витрати</div>
<div id="tx34" class="t" style="left:1190.19px;top:475.35px;font-size:15.3px;font-weight:normal;font-style:normal;color:#333;transform:scaleX(0.9588);transform-origin:0 0;">Надходження</div>
<div id="tx35" class="t" style="left:1512.46px;top:476.05px;font-size:15.3px;font-weight:normal;font-style:normal;color:#333;transform:scaleX(0.8896);transform-origin:0 0;">UAH</div>
<div id="tx36" class="t" style="left:1598.38px;top:476.05px;font-size:15.3px;font-weight:normal;font-style:normal;color:#333;transform:scaleX(0.9330);transform-origin:0 0;">Попередній міс...</div>
<div id="tx37" class="t" style="left:371.10px;top:544.00px;font-size:16.3px;font-weight:normal;font-style:normal;color:#8e9cab;transform:scaleX(0.9601);transform-origin:0 0;">Перелік рахунків</div>
<div id="tx38" class="t" style="left:397.40px;top:583.40px;font-size:15px;font-weight:normal;font-style:normal;color:#333;transform:scaleX(1.0385);transform-origin:0 0;">Поточні рахунки</div>
<div id="tx39" class="t" style="left:398.40px;top:622.50px;font-size:15px;font-weight:normal;font-style:normal;color:#333;transform:scaleX(1.0344);transform-origin:0 0;">Транзитні рахунки</div>
<div id="tx40" class="t" style="left:842.49px;top:684.93px;font-size:14.5px;font-weight:normal;font-style:normal;color:#8e9cab;transform:scaleX(1.0724);transform-origin:0 0;">Всі рахунки</div>
<div id="tx41" class="t" style="left:818.10px;top:702.03px;font-size:16.5px;font-weight:normal;font-style:normal;color:#333;-webkit-text-stroke:0.55px #333;transform:scaleX(1.0629);transform-origin:0 0;">2 079 309,86</div>
<div id="tx42" class="t" style="left:922.97px;top:705.59px;font-size:12.3px;font-weight:normal;font-style:normal;color:#333;-webkit-text-stroke:0.35px #333;transform:scaleX(1.0494);transform-origin:0 0;">UAH</div>
<div id="tx43" class="t" style="left:1089.30px;top:544.00px;font-size:16.3px;font-weight:normal;font-style:normal;color:#8e9cab;transform:scaleX(0.9422);transform-origin:0 0;">ТОП 5 Контрагентів:</div>
<div id="tx44" class="t" style="left:1115.79px;top:582.53px;font-size:15.2px;font-weight:normal;font-style:normal;color:#222;transform:scaleX(0.9465);transform-origin:0 0;">ФІАЛКІН О.С.</div>
<div id="tx45" class="t" style="left:1115.80px;top:622.33px;font-size:15.2px;font-weight:normal;font-style:normal;color:#222;transform:scaleX(0.9751);transform-origin:0 0;">КОМПАНІЯ ВОЛОШКИ-САД</div>
<div id="tx46" class="t" style="left:1115.78px;top:662.13px;font-size:15.2px;font-weight:normal;font-style:normal;color:#222;transform:scaleX(0.9648);transform-origin:0 0;">ІМ’Я ТРОЯНДИ</div>
<div id="tx47" class="t" style="left:1115.79px;top:700.83px;font-size:15.2px;font-weight:normal;font-style:normal;color:#222;transform:scaleX(0.9731);transform-origin:0 0;">ГОРТЕНЗЕНКО З.З.</div>
<div id="tx48" class="t" style="left:1115.79px;top:741.83px;font-size:15.2px;font-weight:normal;font-style:normal;color:#222;transform:scaleX(0.9757);transform-origin:0 0;">ФЛОРИСТ-ЛАЙФ</div>
<div id="tx49" class="t" style="left:1544.30px;top:692.53px;font-size:16.5px;font-weight:normal;font-style:normal;color:#333;-webkit-text-stroke:0.55px #333;transform:scaleX(1.0744);transform-origin:0 0;">149,90</div>
<div id="tx50" class="t" style="left:1601.06px;top:696.09px;font-size:12.3px;font-weight:normal;font-style:normal;color:#333;-webkit-text-stroke:0.35px #333;transform:scaleX(1.0143);transform-origin:0 0;">UAH</div>
<div id="tx51" class="t" style="left:349.50px;top:904.03px;font-size:16.5px;font-weight:bold;font-style:normal;color:#4f5f6e;transform:scaleX(0.8763);transform-origin:0 0;">КОЛИВАННЯ КУРСІВ ВАЛЮТ</div>
<div id="tx52" class="t" style="left:365.49px;top:964.45px;font-size:15.3px;font-weight:normal;font-style:normal;color:#333;transform:scaleX(0.8771);transform-origin:0 0;">USD, EUR, GBP, CHF, LKR</div>
<div id="tx53" class="t" style="left:706.89px;top:965.15px;font-size:15.3px;font-weight:normal;font-style:normal;color:#333;transform:scaleX(0.8503);transform-origin:0 0;">USD</div>
<div id="tx54" class="t" style="left:840.35px;top:965.15px;font-size:15.3px;font-weight:normal;font-style:normal;color:#333;transform:scaleX(0.8538);transform-origin:0 0;">EUR</div>
<div id="tx55" class="t" style="left:973.47px;top:965.15px;font-size:15.3px;font-weight:normal;font-style:normal;color:#333;transform:scaleX(0.8722);transform-origin:0 0;">GBP</div>
<div id="tx56" class="t" style="left:1107.78px;top:965.15px;font-size:15.3px;font-weight:normal;font-style:normal;color:#333;transform:scaleX(0.8869);transform-origin:0 0;">CHF</div>
<div id="tx57" class="t" style="left:1241.46px;top:965.15px;font-size:15.3px;font-weight:normal;font-style:normal;color:#333;transform:scaleX(0.9186);transform-origin:0 0;">LKR</div>
<div id="tx58" class="t" style="left:1584.79px;top:965.05px;font-size:15.3px;font-weight:normal;font-style:normal;color:#333;transform:scaleX(0.9473);transform-origin:0 0;">За 30 днів</div>
<div id="tx59" class="t" style="left:527.59px;top:1029.90px;font-size:9.8px;font-weight:normal;font-style:normal;color:#666;transform:scaleX(1.0078);transform-origin:0 0;">27,6790</div>
<div id="tx60" class="t" style="left:527.59px;top:1079.30px;font-size:9.8px;font-weight:normal;font-style:normal;color:#666;transform:scaleX(1.0078);transform-origin:0 0;">25,7020</div>
<div id="tx61" class="t" style="left:526.53px;top:1128.70px;font-size:9.8px;font-weight:normal;font-style:normal;color:#666;transform:scaleX(1.0383);transform-origin:0 0;">23,7250</div>
</body></html>
